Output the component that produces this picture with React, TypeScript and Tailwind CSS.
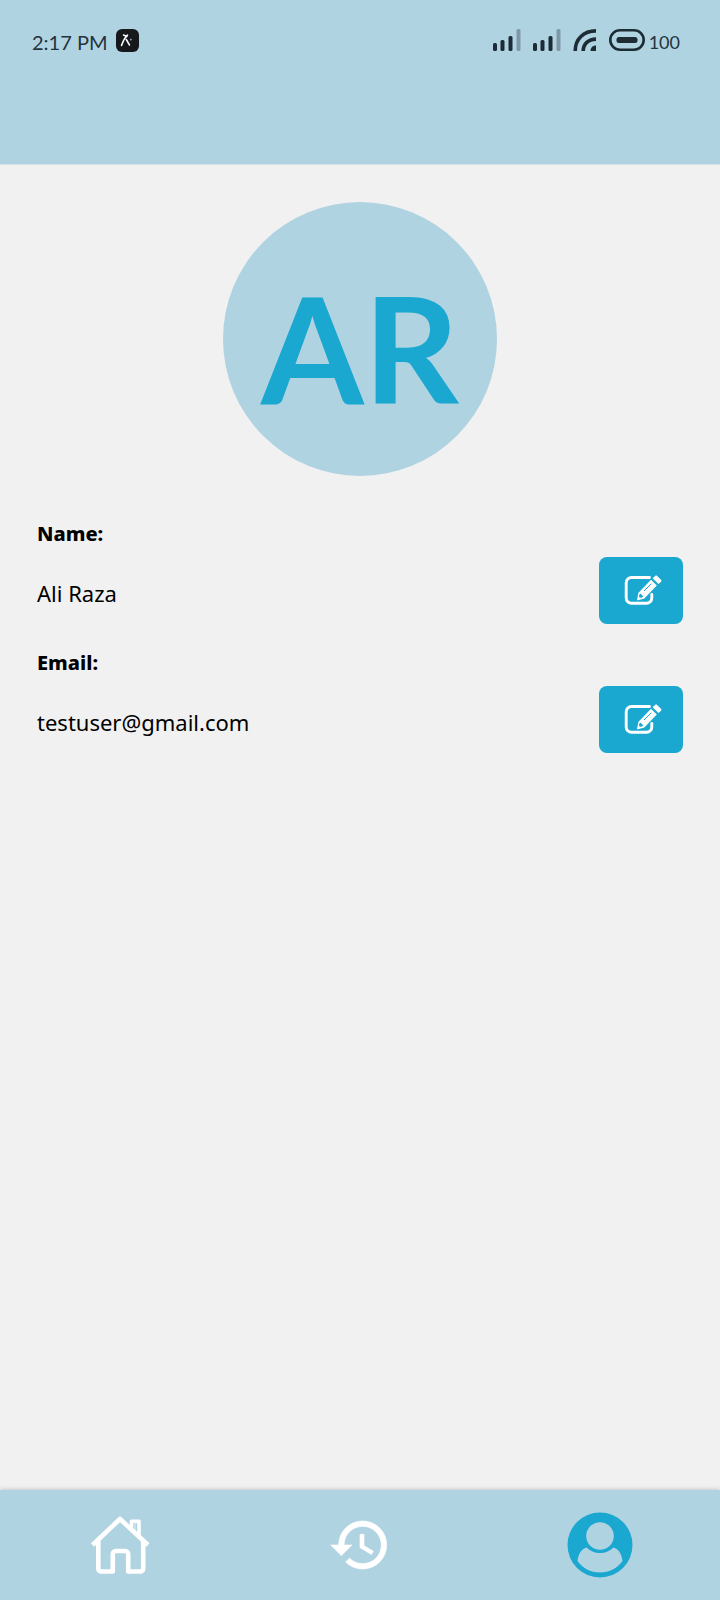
import type { ReactNode } from "react";

function SignalIcon() {
  return (
    <svg viewBox="0 0 28 24" className="h-6 w-7" aria-hidden="true">
      <g fill="#1d2b34">
        <rect x="0" y="15" width="4" height="8" rx="1.500" />
        <rect x="7.500" y="12" width="4" height="11" rx="1.500" />
        <rect x="15.500" y="8" width="4" height="15" rx="1.500" />
      </g>
      <rect x="23.500" y="1" width="4" height="22" rx="1.500" fill="#7e98a6" />
    </svg>
  );
}

function WifiIcon() {
  return (
    <svg viewBox="0 0 24 24" className="size-6" aria-hidden="true">
      <g fill="none" stroke="#1d2b34" strokeWidth="3.600">
        <path d="M2.200 23C2.200 11 10.500 2.900 23 2.900" />
        <path d="M10.200 23c0-7 5.300-11.900 12.800-11.900" />
      </g>
      <path d="M23 17.500V23h-5.500c0-3.300 2.200-5.500 5.500-5.500z" fill="#1d2b34" />
    </svg>
  );
}

function BatteryIcon() {
  return (
    <svg viewBox="0 0 36 22" className="h-[22px] w-9" aria-hidden="true">
      <rect x="1.300" y="1.300" width="33.400" height="19.400" rx="9.700" fill="none" stroke="#1d2b34" strokeWidth="2.600" />
      <rect x="7.500" y="8" width="21" height="6" rx="2.500" fill="#1d2b34" />
    </svg>
  );
}

function AppBadge() {
  return (
    <svg viewBox="0 0 23 23" className="size-[23px]" aria-hidden="true">
      <rect width="23" height="23" rx="6" fill="#16191b" />
      <path d="M5.500 16.500c1.300-4 3-7.500 6-10.500M7.500 6l3.500 1.500M10.300 10.500l3.200 5.500" fill="none" stroke="#fff" strokeWidth="1.500" strokeLinecap="round" />
      <path d="M14.500 9.500l1.700 1.500-2.200.5z" fill="#b9c6ee" />
    </svg>
  );
}

function EditIcon() {
  return (
    <svg viewBox="0 0 38 32" className="h-8 w-[38px]" aria-hidden="true">
      <path d="M25.500 2.500H7.500A5.300 5.300 0 0 0 2.200 7.800V23a5.300 5.300 0 0 0 5.300 5.300h15A5.300 5.300 0 0 0 27.800 23v-3.500" fill="none" stroke="#fff" strokeWidth="2.900" strokeLinecap="round" />
      <path d="M27 4.800l5.800 5.800L20.300 23.500l-6.300 1.800c-.6.100-1-.3-.9-.900l1.400-6.700z" fill="#fff" />
      <path d="M28.600 3.200l2.500-2.300c.7-.6 1.400-.6 2 0l3.900 3.900c.6.600.6 1.300 0 2l-2.500 2.300z" fill="#fff" />
      <path d="M20 16l7.300-7.300" stroke="#1aa7d0" strokeWidth="1" />
      <path d="M16.300 18.500l3 2.800-1.600 1.500-2.400-.2-.3-2.400z" fill="#1aa7d0" />
    </svg>
  );
}

function HomeIcon() {
  return (
    <svg viewBox="0 0 64 64" className="size-16" aria-hidden="true">
      <g fill="none" stroke="#fff" strokeWidth="4.600" strokeLinejoin="round">
        <path d="M4.500 32L32 6 60 32" />
        <path d="M10.300 28v27.500a3 3 0 0 0 3 3H24.800V41a3 3 0 0 1 3-3h9.400a3 3 0 0 1 3 3V58.500H52.200a3 3 0 0 0 3-3V28" />
        <path d="M43.500 14.500V8.300H51v14.200" strokeWidth="3.600" />
        <path d="M47 8v11" strokeWidth="1.200" strokeOpacity=".5" />
      </g>
    </svg>
  );
}

function HistoryIcon() {
  return (
    <svg viewBox="0 0 24 24" className="size-16" fill="#fff" aria-hidden="true">
      <path d="M13 3a9 9 0 0 0-9 9H1l3.890 3.890.07.14L9 12H6c0-3.870 3.130-7 7-7s7 3.130 7 7-3.130 7-7 7c-1.930 0-3.680-.79-4.940-2.060l-1.420 1.420A8.954 8.954 0 0 0 13 21a9 9 0 0 0 0-18zm-1 5v5l4.280 2.540.72-1.210-3.500-2.080V8H12z" stroke="#fff" strokeWidth=".25" />
    </svg>
  );
}

function ProfileIcon() {
  return (
    <svg viewBox="0 0 66 66" className="size-[66px]" aria-hidden="true">
      <circle cx="33" cy="33" r="32.500" fill="#1aa7d0" />
      <path d="M19.500 35.500c-5 1.500-8.300 6.500-9 13.500 5 7 13 11.500 22.500 11.500S50.500 56 55.500 49c-.7-7-4-12-9-13.500-3.500 3.500-8 5.500-13.500 5.500s-10-2-13.500-5.500z" fill="#b0d3e2" />
      <circle cx="33" cy="24" r="16.500" fill="#1aa7d0" />
      <circle cx="33" cy="24" r="13.800" fill="#b0d3e2" />
    </svg>
  );
}

function Field({ label, value }: { label: string; value: string }) {
  return (
    <div>
      <dt className="text-xl leading-6 font-extrabold">{label}:</dt>
      <dd className="mt-[11px] flex items-center justify-between">
        <span className="pt-1 text-[22px] leading-7">{value}</span>
        <button
          type="button"
          aria-label={`Edit ${label.toLowerCase()}`}
          className="flex h-[67px] w-[84px] items-center justify-center rounded-lg bg-[#1aa7d0] pl-1"
        >
          <EditIcon />
        </button>
      </dd>
    </div>
  );
}

function NavItem({ label, current, children }: { label: string; current?: boolean; children: ReactNode }) {
  return (
    <a href="#" aria-label={label} aria-current={current ? "page" : undefined} className="flex items-center justify-center">
      {children}
    </a>
  );
}

export default function App() {
  return (
    <div className="flex min-h-screen flex-col bg-[#f1f1f1] font-['Lato','Noto_Sans',sans-serif] text-black">
      <header className="h-[165px] border-b border-[#d5e1e8] bg-[#b0d3e2]">
        <div className="flex items-center justify-between pt-[26px] pr-10 pl-8 text-xl leading-6 text-[#24333d]">
          <div className="flex items-center gap-2">
            <span className="pt-1">2:17 PM</span>
            <AppBadge />
          </div>
          <div className="flex items-center gap-3">
            <SignalIcon />
            <SignalIcon />
            <WifiIcon />
            <div className="flex items-center gap-1">
              <BatteryIcon />
              <span className="pt-1 text-lg leading-6">100</span>
            </div>
          </div>
        </div>
      </header>

      <main className="flex-1 px-[37px] pt-[37px]">
        <div className="mx-auto flex size-[274px] items-center justify-center rounded-full bg-[#b0d3e2] pt-4 text-[148px] leading-none font-bold text-[#1aa7d0]">
          AR
        </div>
        <dl className="mt-[46px] flex flex-col gap-[27px] font-['Noto_Sans',sans-serif]">
          <Field label="Name" value="Ali Raza" />
          <Field label="Email" value="testuser@gmail.com" />
        </dl>
      </main>

      <nav className="grid h-[110px] grid-cols-3 bg-[#b0d3e2] shadow-[0_-1px_4px_rgba(0,0,0,0.16)]">
        <NavItem label="Home"><HomeIcon /></NavItem>
        <NavItem label="History"><HistoryIcon /></NavItem>
        <NavItem label="Profile" current><ProfileIcon /></NavItem>
      </nav>
    </div>
  );
}
